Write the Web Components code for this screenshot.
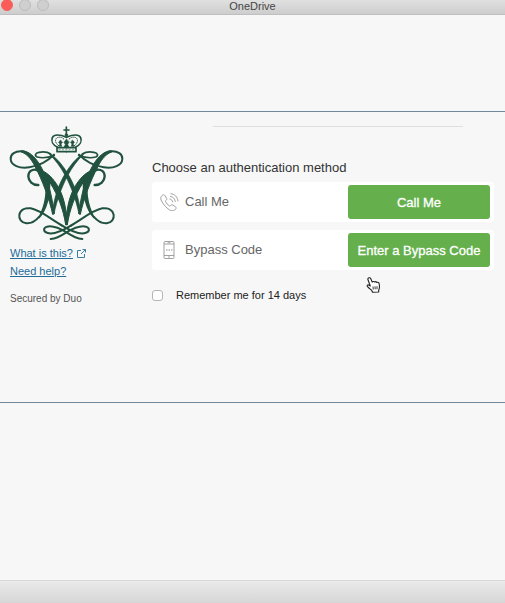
<!DOCTYPE html>
<html lang="en">
<head>
<meta charset="utf-8">
<title>OneDrive</title>
<style>
  html, body {
    height: 100%;
    margin: 0;
  }

  body {
    background: #f7f7f7;
    font-family: "Liberation Sans", Arial, sans-serif;
    color: #333;
  }
</style>
</head>
<body>

<app-window heading="OneDrive">
  <duo-prompt>
    <college-crest slot="logo"></college-crest>
    <help-links slot="links"></help-links>
    <auth-method icon="phone" action="Call Me">Call Me</auth-method>
    <auth-method icon="device" action="Enter a Bypass Code">Bypass Code</auth-method>
    <remember-me slot="remember">Remember me for 14 days</remember-me>
  </duo-prompt>
</app-window>
<hand-pointer></hand-pointer>

<script>
(function () {
  /* window frame: title bar, content, status bar */
  class AppWindow extends HTMLElement {
    constructor() {
      super();
      this.attachShadow({ mode: "open" });
      this.shadowRoot.innerHTML = `
        <style>
        :host{
            display:flex;
            flex-direction:column;
            min-height:100%;
        }
        header{
            display:grid;
            grid-template-columns:1fr auto 1fr;
            align-items:center;
            height:14px;
            padding:0 1px;
            background:linear-gradient(#e0e0e0,#cdcdcd);
            border-bottom:1px solid #bfbfbf;
            overflow:hidden;
        }
        .lights{
            display:flex;
            gap:6px;
            margin-top:-4px;
        }
        .lights i{
            box-sizing:border-box;
            width:12px;
            height:12px;
            border-radius:50%;
            background:#cfcfcf;
            border:1px solid #bbb;
        }
        .lights .close{
            background:#fc5b57;
            border-color:#ee6560;
        }
        h1{
            margin:0;
            font-size:11px;
            line-height:12px;
            font-weight:normal;
            color:#444;
            margin-top:-3px;
        }
        main{
            flex:1;
            padding-top:96px;
        }
        footer{
            height:22px;
            background:linear-gradient(#eaeaea,#d6d6d6);
            border-top:1px solid #d8d8d8;
        }
        </style>
        <header>
            <div class="lights"><i class="close"></i><i></i><i></i></div>
            <h1></h1>
        </header>
        <main><slot></slot></main>
        <footer></footer>
        `;
    }

    connectedCallback() {
      this.shadowRoot.querySelector("h1").textContent = this.getAttribute("heading");
    }
  }

  class DuoPrompt extends HTMLElement {
    constructor() {
      super();
      this.attachShadow({ mode: "open" });
      this.shadowRoot.innerHTML = `
        <style>
        :host{
            display:flex;
            box-sizing:border-box;
            min-height:292px;
            padding:14px 11px 0 9px;
            border-top:1px solid #72899c;
            border-bottom:1px solid #72899c;
        }
        aside{
            flex:none;
            width:143px;
        }
        section{
            flex:1;
            display:flex;
            flex-direction:column;
        }
        hr{
            width:73%;
            height:1px;
            margin:0 0 32px 61px;
            border:0;
            background:#dedede;
        }
        h2{
            margin:0 0 5px;
            font-size:13px;
            line-height:18px;
            font-weight:normal;
            color:#333;
        }
        .methods{
            display:flex;
            flex-direction:column;
            gap:8px;
        }
        </style>
        <aside>
            <slot name="logo"></slot>
            <slot name="links"></slot>
        </aside>
        <section>
            <hr>
            <h2>Choose an authentication method</h2>
            <div class="methods"><slot></slot></div>
            <slot name="remember"></slot>
        </section>
        `;
    }
  }

  class CollegeCrest extends HTMLElement {
    constructor() {
      super();
      this.attachShadow({ mode: "open" });
      this.shadowRoot.innerHTML = `
        <style>
        :host{
            display:block;
        }
        svg{
            display:block;
            width:116px;
            height:115px;
        }
        </style>
        <svg viewBox="27 33 348 345" fill="none" stroke="#21523f" stroke-width="6" stroke-linecap="round" stroke-linejoin="round" aria-hidden="true">
            <defs>
                <g id="half">
                    <!-- upper loop running into the outer stem -->
                    <path d="M162 119C146 136 118 152 88 157C58 162 33 151 32 132C31 117 46 108 65 109C82 110 94 122 104 138" />
                    <path d="M66 107C86 108 104 124 118 147C138 180 153 222 163 296L158 298C148 252 128 198 104 152C93 131 80 116 64 111Z" fill="#21523f" stroke-width="3" />
                    <!-- small inner loop and long diagonal -->
                    <path d="M163 121C145 128 125 130 112 126C103 122 105 114 117 112C133 109 143 111 152 117" stroke-width="5" />
                    <path d="M150 115C172 131 189 152 203 175C221 205 237 243 242 297L237 297C228 254 213 214 196 182C182 156 166 134 149 119Z" fill="#21523f" stroke-width="2" />
                    <!-- curl running into the middle stem -->
                    <path d="M115 210C97 211 86 199 85 184C85 169 96 162 109 164" stroke-width="7" />
                    <path d="M108 162C132 164 154 182 172 211C189 239 199 274 202 329L197 329C190 284 174 240 150 203C137 184 124 171 108 167Z" fill="#21523f" stroke-width="3" />
                    <!-- lower loop -->
                    <path d="M118 305C106 319 94 326 79 325C64 323 56 312 58 299C61 285 75 278 92 280C123 286 153 313 188 333" />
                    <path d="M139 178L147 190C152 220 147 250 137 276C131 290 125 301 117 308C126 290 134 270 137 245C140 222 141 200 139 178Z" fill="#21523f" stroke-width="4" />
                    <!-- bow -->
                    <path d="M185 331C216 350 240 359 256 354C270 350 270 339 258 335C239 330 213 344 198 353C183 363 168 371 152 372" />
                    <!-- crown -->
                    <path d="M173 97C158 90 153 78 157 68C162 57 180 58 199 67" stroke-width="5" />
                    <path d="M176 92C166 84 164 75 170 69C177 64 188 67 193 74" stroke-width="3" stroke-dasharray="2 4" />
                    <path d="M199 98H171V110H199" stroke-width="5" />
                    <path d="M181 76L176 82L180 87L177 94H185L183 87L187 82Z" fill="#21523f" stroke-width="2" />
                </g>
            </defs>
            <use href="#half" />
            <use href="#half" transform="translate(399 0) scale(-1 1)" />
            <path d="M199 36V60M192 45H207" stroke-width="5" />
            <circle cx="199" cy="60" r="4" fill="#21523f" stroke-width="2" />
            <path d="M199 73L192 82L196 88L193 96H206L203 88L207 82Z" fill="#21523f" stroke-width="2" />
            <path d="M177 104H222" stroke="#8fa99d" stroke-width="3" stroke-dasharray="4 6" />
        </svg>
        `;
    }
  }

  class HelpLinks extends HTMLElement {
    constructor() {
      super();
      this.attachShadow({ mode: "open" });
      this.shadowRoot.innerHTML = `
        <style>
        :host{
            display:block;
            padding:3px 1px;
            font-size:11px;
            line-height:18px;
        }
        div{
            display:flex;
            align-items:center;
            gap:4px;
        }
        a{
            color:#226b97;
        }
        svg{
            width:9px;
            height:9px;
        }
        p{
            margin:10px 0 0;
            font-size:10px;
            color:#555;
        }
        </style>
        <div>
            <a href="#what">What is this?</a>
            <svg viewBox="0 0 9 9" fill="none" stroke="#3c7fa5" aria-hidden="true">
                <path d="M4 1.5H.5V8.500H7.500V5M5.500.5H8.500V3.500M8.500.5L4 5" />
            </svg>
        </div>
        <div><a href="#help">Need help?</a></div>
        <p>Secured by Duo</p>
        `;
    }
  }

  const ICONS = {
    phone: `
      <path d="M3 2C1 3 0 5 1.500 8C4 12.500 7 15.500 10.500 17.500C13 18.500 15 17.500 16 15.500C16.300 14.800 16 14.300 15.500 13.800L12.500 11.800C11.800 11.400 11.200 11.700 10.500 12.700C10 13.300 9.500 13 9 12.700C7.500 11.500 6.500 10.300 5.500 8.700C5.200 8 5.400 7.600 6 7.200C7 6.500 7 6 6.600 5.300L4.700 2.300C4.200 1.600 3.700 1.600 3 2Z" />
      <path d="M9.500 6C11.500 6.300 12.500 7.500 12.800 9.300M10 3.300C13 3.600 15 5.800 15.300 8.800M10.500.7C14.800 1 17.600 4 18 8.300" />`,
    device: `
      <rect x="4" y=".5" width="10" height="17" rx="1" />
      <path d="M4 3H14M4 14.500H14M7.500 1.700H10.500M8 16H10" />
      <path d="M6 9H7.500M8.500 9H10M11 9H12.500" stroke-width="1.200" />`,
  };

  class AuthMethod extends HTMLElement {
    constructor() {
      super();
      this.attachShadow({ mode: "open" });
      this.shadowRoot.innerHTML = `
        <style>
        :host{
            display:flex;
            align-items:center;
            padding:3px 4px 3px 8px;
            background:#fff;
            border-radius:3px;
        }
        svg{
            flex:none;
            width:19px;
            height:18px;
            margin-right:6px;
        }
        label{
            flex:1;
            font-size:13px;
            line-height:18px;
            color:#666;
        }
        button{
            width:142px;
            height:34px;
            padding:0;
            border:0;
            border-radius:3px;
            background:#65b04d;
            color:#fff;
            font:13px "Liberation Sans", Arial, sans-serif;
            -webkit-text-stroke:.3px #fff;
        }
        </style>
        <svg viewBox="0 0 19 18" fill="none" stroke="#8c8c8c" stroke-width=".8" aria-hidden="true"></svg>
        <label for="go"><slot></slot></label>
        <button id="go" type="button"></button>
        `;
    }

    connectedCallback() {
      this.shadowRoot.querySelector("svg").innerHTML = ICONS[this.getAttribute("icon")];
      this.shadowRoot.querySelector("button").textContent = this.getAttribute("action");
    }
  }

  class RememberMe extends HTMLElement {
    constructor() {
      super();
      this.attachShadow({ mode: "open" });
      this.shadowRoot.innerHTML = `
        <style>
        :host{
            display:flex;
            align-items:center;
            gap:13px;
            margin-top:16px;
            font-size:11px;
            line-height:18px;
            color:#222;
        }
        input{
            appearance:none;
            box-sizing:border-box;
            width:11px;
            height:11px;
            margin:0;
            border:1px solid #b5b5b5;
            border-radius:3px;
            background:#fff;
        }
        </style>
        <input type="checkbox" id="remember">
        <label for="remember"><slot></slot></label>
        `;
    }
  }

  /* pointer floating over the page */
  class HandPointer extends HTMLElement {
    constructor() {
      super();
      this.attachShadow({ mode: "open" });
      this.shadowRoot.innerHTML = `
        <style>
        :host{
            position:absolute;
            left:366px;
            top:277px;
            pointer-events:none;
        }
        svg{
            display:block;
            width:15px;
            height:16px;
        }
        </style>
        <svg viewBox="0 0 15 16" fill="#fff" stroke="#222" stroke-width="1.100" stroke-linejoin="round" aria-hidden="true">
            <path d="M2.500 1C3.500.4 4.400.9 4.800 1.800L6.200 5C7 4.200 8 4.400 8.500 5C9.300 4.500 10.200 4.700 10.700 5.400C12 5 13 5.700 13.200 7L13.500 9.500C13.600 11 12.900 12 12.700 13.500V15L6.500 15.300L5.800 13.500C4.500 12.300 3 11.300 1.500 9.700C.6 8.600 1.500 7.600 2.600 8L4.300 9L2 2.800C1.700 2 1.900 1.400 2.500 1Z" />
            <path d="M7 9.500L7.300 12.500M9 9.300L9.200 12.300M11 9.200V12.200" stroke-width=".9" />
        </svg>
        `;
    }
  }

  customElements.define("app-window", AppWindow);
  customElements.define("duo-prompt", DuoPrompt);
  customElements.define("college-crest", CollegeCrest);
  customElements.define("help-links", HelpLinks);
  customElements.define("auth-method", AuthMethod);
  customElements.define("remember-me", RememberMe);
  customElements.define("hand-pointer", HandPointer);
})();
</script>
</body>
</html>
